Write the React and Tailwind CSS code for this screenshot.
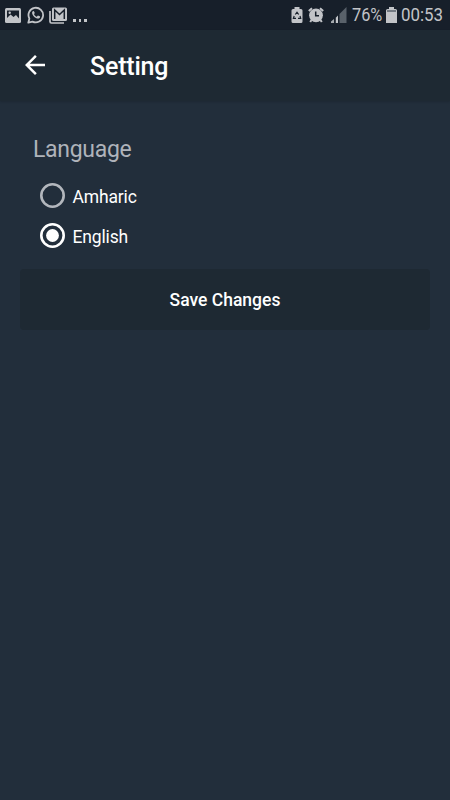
import { useState } from 'react';
import { MdArrowBack } from 'react-icons/md';

const LANGUAGES = [
  { code: 'am', label: 'Amharic' },
  { code: 'en', label: 'English' },
];

export default function App() {
  const [language, setLanguage] = useState('en');

  return (
    <div className="h-[800px] w-[450px] overflow-hidden bg-[#222e3b] font-[Roboto,sans-serif] text-white">
      <StatusBar />
      <header className="flex h-[71px] items-center bg-[#1e2933] pl-5 shadow-[0_1px_2px_rgba(0,0,0,0.15)]">
        <button type="button" aria-label="Back" className="-mt-[1px]">
          <MdArrowBack size={30} />
        </button>
        <h1 className="ml-10 pt-[3px] text-[25px] leading-[30px] font-medium tracking-[-0.2px] whitespace-nowrap">Setting</h1>
      </header>

      <main className="px-5 pt-[33px]">
        <h2 className="pt-[1px] pl-[13px] text-[23px] leading-[30px] tracking-[-0.3px] text-[#afb3ba]">Language</h2>
        <div className="mt-[11px] pl-5">
          {LANGUAGES.map((lang) => (
            <Radio
              key={lang.code}
              label={lang.label}
              checked={language === lang.code}
              onChange={() => setLanguage(lang.code)}
            />
          ))}
        </div>
        <button
          type="button"
          className="mt-[13px] flex h-[61px] w-full items-center justify-center rounded-[4px] bg-[#1e2933] pt-[2px] text-[17.5px] font-medium"
        >
          Save Changes
        </button>
      </main>
    </div>
  );
}

function Radio({ label, checked, onChange }) {
  return (
    <label className="flex h-10 items-center gap-[7.5px]">
      <input type="radio" name="language" checked={checked} onChange={onChange} className="sr-only" />
      <RadioMark checked={checked} />
      <span className="pt-[1px] text-[17.5px] leading-6 tracking-[-0.15px]">{label}</span>
    </label>
  );
}

function RadioMark({ checked }) {
  return (
    <svg
      width="25"
      height="25"
      viewBox="0 0 25 25"
      fill="none"
      className={`-mt-[2px] shrink-0 ${checked ? 'text-white' : 'text-[#b3b7bd]'}`}
    >
      <circle cx="12.5" cy="12.5" r="11.2" stroke="currentColor" strokeWidth="2.6" />
      {checked && <circle cx="12.5" cy="12.5" r="6.4" fill="currentColor" />}
    </svg>
  );
}

function StatusBar() {
  return (
    <div className="flex h-[30px] items-center bg-[#171f2a] text-[#c2c4c8]">
      <ImageIcon />
      <WhatsAppIcon />
      <MailStackIcon />
      <span className="ml-[6px] flex gap-[3px] pt-[11px]">
        <i className="size-[2.5px] bg-current" />
        <i className="size-[2.5px] bg-current" />
        <i className="size-[2.5px] bg-current" />
      </span>

      <div className="ml-auto flex items-center">
        <RecycleBatteryIcon />
        <AlarmIcon />
        <SignalIcon />
        <span className="ml-[5px] w-[31px] text-[19px] leading-[30px] whitespace-nowrap">
          <span className="inline-block origin-left scale-x-[0.86]">76%</span>
        </span>
        <BatteryIcon />
        <span className="ml-[4px] w-[49px] text-[19px] leading-[30px] whitespace-nowrap">
          <span className="inline-block origin-left scale-x-[0.89]">00:53</span>
        </span>
      </div>
    </div>
  );
}

function ImageIcon() {
  return (
    <svg width="16" height="15" viewBox="0 0 16 15" className="ml-[5px] shrink-0">
      <rect width="16" height="15" rx="1.5" fill="currentColor" />
      <path d="M2 2.500h12v8L11 7 8.500 9 5.500 6.500 2 10z" fill="#171f2a" />
      <circle cx="4.700" cy="4.800" r="1.200" fill="currentColor" />
    </svg>
  );
}

function WhatsAppIcon() {
  return (
    <svg width="18" height="18" viewBox="0 0 18 18" fill="none" className="ml-[6px] shrink-0">
      <path d="M1.3 16.7l1.1-4.1A7.3 7.3 0 1 1 5.5 15.6z" stroke="currentColor" strokeWidth="1.8" strokeLinejoin="round" />
      <path
        d="M6.4 4.9c-.5 0-1.3.7-1.3 1.8 0 2.6 3.3 5.9 6 5.9 1.2 0 2-.9 2-1.8 0-.4-1.7-1.2-2.1-1.2s-.8 1.1-1.2 1.1c-.8 0-2.7-1.8-2.7-2.5 0-.3.7-.8.7-1.1 0-.4-.7-2.2-1.4-2.2z"
        fill="currentColor"
      />
    </svg>
  );
}

function MailStackIcon() {
  return (
    <svg width="18" height="17" viewBox="0 0 18 17" fill="none" className="ml-[4px] shrink-0">
      <path d="M1 4v10.5q0 1.5 1.5 1.5H15" stroke="currentColor" strokeWidth="1.7" />
      <rect x="3" y=".5" width="15" height="13.5" rx="1.5" fill="currentColor" />
      <path d="M5.700 12V3l4.800 4.500L15.300 3v9" stroke="#171f2a" strokeWidth="1.500" />
    </svg>
  );
}

function RecycleBatteryIcon() {
  return (
    <svg width="12" height="16" viewBox="0 0 12 16" fill="none" className="shrink-0">
      <path d="M3.5 0h5v2H10a1.5 1.5 0 0 1 1.5 1.5v11A1.5 1.5 0 0 1 10 16H2A1.5 1.5 0 0 1 .5 14.5v-11A1.5 1.5 0 0 1 2 2h1.5z" fill="currentColor" />
      <path d="M4.3 7.5L6 5.3l1.7 2.2M9 9l.7 2.3H7M5 11.3H2.4L3.2 9" stroke="#171f2a" strokeWidth="1.2" />
    </svg>
  );
}

function AlarmIcon() {
  return (
    <svg width="16" height="16" viewBox="0 0 16 16" fill="none" className="ml-[5px] shrink-0">
      <circle cx="8" cy="8.3" r="6.9" fill="currentColor" />
      <path d="M.8 4L4 1.2M15.2 4L12 1.2M3.5 13l-1.3 2M12.5 13l1.3 2" stroke="currentColor" strokeWidth="2" />
      <path d="M7.7 4.5v4.2H11" stroke="#171f2a" strokeWidth="1.5" />
    </svg>
  );
}

function SignalIcon() {
  return (
    <svg width="16" height="16" viewBox="0 0 16 16" className="ml-[7px] shrink-0">
      <path d="M0 16v-1.5L3 12v4z" fill="#a5a9ae" />
      <path d="M4.8 16v-5.300L7 8.500V16z" fill="currentColor" />
      <path d="M8.500 16V7L15.500 0v16z" fill="#59616a" />
    </svg>
  );
}

function BatteryIcon() {
  return (
    <svg width="11" height="16" viewBox="0 0 11 16" className="ml-[3px] shrink-0">
      <path d="M3 0h5v2h1.5A1.5 1.5 0 0 1 11 3.5V16H0V3.5A1.5 1.5 0 0 1 1.5 2H3z" fill="currentColor" />
      <path d="M1 3h9v2H1z" fill="#747b83" />
    </svg>
  );
}
